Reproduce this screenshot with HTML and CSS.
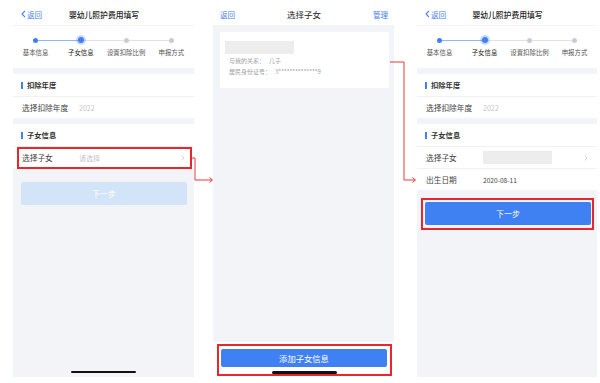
FILE: index.html
```html
<!DOCTYPE html>
<html lang="zh-CN">
<head>
  <meta charset="UTF-8" />
  <meta name="viewport" content="width=device-width, initial-scale=1.0" />
  <title>婴幼儿照护费用填写</title>
  <link rel="stylesheet" href="styles.css">
</head>
<body>
  <div class="page">
    <!-- 第一屏：填写，未选子女 -->
    <section class="screen">
      <header class="nav">
        <span class="nav-back">
          <svg class="back-icon" viewBox="0 0 5 8" width="5" height="8"><path d="M4 0.8 L1 4 L4 7.2" fill="none" stroke="currentColor" stroke-width="1.1"/></svg>返回
        </span>
        <h1 class="nav-title">婴幼儿照护费用填写</h1>
        <span></span>
      </header>
      <ol class="steps">
        <li class="step done"><i class="dot"></i>基本信息</li>
        <li class="step current"><i class="dot"></i>子女信息</li>
        <li class="step"><i class="dot"></i>设置扣除比例</li>
        <li class="step"><i class="dot"></i>申报方式</li>
      </ol>
      <div class="group">
        <h2 class="group-title">扣除年度</h2>
        <div class="row"><span class="row-label">选择扣除年度</span><span class="row-value muted">2022</span></div>
      </div>
      <div class="group">
        <h2 class="group-title">子女信息</h2>
        <div class="row mark mark-row">
          <span class="row-label">选择子女</span><span class="row-value muted">请选择</span>
          <svg class="chevron" viewBox="0 0 4 6" width="4" height="6"><path d="M0.8 0.6 L3 3 L0.8 5.4" fill="none" stroke="currentColor" stroke-width="0.8"/></svg>
        </div>
      </div>
      <button class="btn btn-next disabled">下一步</button>
      <div class="home-bar"></div>
    </section>

    <!-- 第二屏：选择子女 -->
    <section class="screen screen-list">
      <header class="nav">
        <span class="nav-back">返回</span>
        <h1 class="nav-title big">选择子女</h1>
        <span class="nav-action">管理</span>
      </header>
      <div class="list">
        <div class="child-card">
          <div class="blank"></div>
          <p class="child-line">与我的关系：<span>儿子</span></p>
          <p class="child-line">居民身份证号：<span>3**************9</span></p>
        </div>
      </div>
      <footer class="list-footer mark mark-footer">
        <button class="btn btn-add">添加子女信息</button>
        <div class="home-bar"></div>
      </footer>
    </section>

    <!-- 第三屏：已选子女 -->
    <section class="screen screen-done">
      <header class="nav">
        <span class="nav-back">
          <svg class="back-icon" viewBox="0 0 5 8" width="5" height="8"><path d="M4 0.8 L1 4 L4 7.2" fill="none" stroke="currentColor" stroke-width="1.1"/></svg>返回
        </span>
        <h1 class="nav-title">婴幼儿照护费用填写</h1>
        <span></span>
      </header>
      <ol class="steps">
        <li class="step done"><i class="dot"></i>基本信息</li>
        <li class="step current"><i class="dot"></i>子女信息</li>
        <li class="step"><i class="dot"></i>设置扣除比例</li>
        <li class="step"><i class="dot"></i>申报方式</li>
      </ol>
      <div class="group">
        <h2 class="group-title">扣除年度</h2>
        <div class="row"><span class="row-label">选择扣除年度</span><span class="row-value muted">2022</span></div>
      </div>
      <div class="group">
        <h2 class="group-title">子女信息</h2>
        <div class="row">
          <span class="row-label">选择子女</span><span class="blank blank-value"></span>
          <svg class="chevron" viewBox="0 0 4 6" width="4" height="6"><path d="M0.8 0.6 L3 3 L0.8 5.4" fill="none" stroke="currentColor" stroke-width="0.8"/></svg>
        </div>
        <div class="row"><span class="row-label">出生日期</span><span class="row-value">2020-08-11</span></div>
      </div>
      <button class="btn btn-next mark mark-btn">下一步</button>
    </section>

    <svg class="arrows" viewBox="0 0 600 383" width="600" height="383">
      <path d="M192 158 H195 V180 H212" fill="none" stroke="#e8383d" stroke-width="1"/>
      <path d="M209.5 177.5 L212.5 180 L209.5 182.5" fill="none" stroke="#e8383d" stroke-width="1"/>
      <path d="M390 62 H404 V180 H415" fill="none" stroke="#e8383d" stroke-width="1"/>
      <path d="M412.5 177.5 L415.5 180 L412.5 182.5" fill="none" stroke="#e8383d" stroke-width="1"/>
    </svg>
  </div>
</body>
</html>
```

FILE: styles.css
```css
body {
  margin: 0;
  font-family: "Noto Sans CJK SC", "Noto Sans", sans-serif;
  background: #fff;
  color: #333;
}
.page {
  position: relative;
  width: 600px;
  height: 383px;
  display: flex;
  padding-left: 13px;
  box-sizing: border-box;
  overflow: hidden;
}
.screen {
  width: 181px;
  height: 377px;
  display: flex;
  flex-direction: column;
  background: #f3f4f8;
}
.screen-list {
  margin-left: 19px;
}
.screen-done {
  width: 180px;
  margin-left: 23px;
}

/* 顶部导航 */
.nav {
  height: 26px;
  box-sizing: border-box;
  padding: 3px 6px 0 7px;
  display: grid;
  grid-template-columns: 1fr auto 1fr;
  align-items: center;
  background: #fff;
  border-bottom: 1px solid #f4f4f6;
}
.nav-back {
  display: flex;
  align-items: center;
  gap: 1px;
  font-size: 7.5px;
  color: #3f80f2;
}
.back-icon {
  margin-left: 1px;
}
.nav-title {
  margin: 0;
  font-size: 7.8px;
  font-weight: 500;
  color: #222;
}
.nav-title.big {
  font-size: 8.5px;
  font-weight: 400;
}
.nav-action {
  justify-self: end;
  font-size: 7.5px;
  color: #3f80f2;
}

/* 步骤条 */
.steps {
  list-style: none;
  margin: 0;
  padding: 11px 0 0;
  height: 42px;
  box-sizing: border-box;
  display: grid;
  grid-template-columns: repeat(4, 1fr);
  background: #fff;
}
.step {
  position: relative;
  display: flex;
  flex-direction: column;
  align-items: center;
  font-size: 6.4px;
  line-height: 8px;
  color: #555;
}
.step:not(:last-child)::after {
  content: "";
  position: absolute;
  top: 3px;
  left: 50%;
  width: 100%;
  height: 1px;
  background: #dfe2e8;
}
.step.done::after {
  background: #8fb5f6;
}
.dot {
  position: relative;
  z-index: 1;
  width: 5px;
  height: 5px;
  margin: 0.5px 0 6.5px;
  border-radius: 50%;
  background: #c9ccd3;
}
.step.done .dot {
  background: #3f80f2;
}
.step.current {
  color: #222;
}
.step.current .dot {
  width: 6px;
  height: 6px;
  margin: 0 0 6px;
  background: #3f80f2;
  box-shadow: 0 0 0 2px rgba(63, 128, 242, 0.28);
}

/* 分组与行 */
.group {
  margin-top: 6px;
  background: #fff;
}
.group-title {
  margin: 0;
  height: 22px;
  display: flex;
  align-items: center;
  gap: 4px;
  padding-left: 8px;
  font-size: 7.3px;
  font-weight: 700;
  color: #333;
}
.group-title::before {
  content: "";
  width: 2px;
  height: 7px;
  background: #3f80f2;
}
.row {
  height: 22px;
  display: flex;
  align-items: center;
  padding: 0 9px;
  border-top: 1px solid #f1f1f3;
  box-sizing: border-box;
  font-size: 7.7px;
}
.row-label {
  width: 57px;
  flex: none;
  color: #444;
}
.row-value {
  color: #444;
  font-size: 6.6px;
}
.row-value.muted {
  color: #c4c4c8;
  font-size: 7px;
}
.chevron {
  margin-left: auto;
  color: #c7c7cc;
}
.blank {
  background: #ededee;
}
.blank-value {
  width: 69px;
  height: 13px;
}

/* 按钮 */
.btn {
  display: block;
  border: none;
  border-radius: 2px;
  font-family: inherit;
  color: #fff;
  background: #3f80f2;
  font-size: 8px;
}
.btn-next {
  height: 23px;
  margin: 14px 7px 0 8px;
}
.btn-next.disabled {
  background: #d3e4f8;
}
.screen-done .btn-next {
  margin-top: 12px;
  margin-right: 6px;
}
.home-bar {
  width: 65px;
  height: 2.5px;
  margin: auto auto 4px;
  border-radius: 2px;
  background: #111;
}

/* 子女列表 */
.list {
  flex: 1;
  padding: 6px 5px 0 7px;
}
.child-card {
  background: #fff;
  height: 56px;
  box-sizing: border-box;
  padding: 9px 5px 0;
}
.child-card .blank {
  width: 69px;
  height: 13px;
}
.child-line {
  margin: 2px 0 0;
  padding-left: 4px;
  font-size: 6px;
  line-height: 9px;
  color: #a2a2a6;
}
.child-line span {
  margin-left: 4px;
}
.list-footer {
  height: 35px;
  box-sizing: border-box;
  padding: 7px 7px 0 8px;
  background: #fff;
  display: flex;
  flex-direction: column;
}
.btn-add {
  width: 100%;
  height: 18px;
  font-size: 8.3px;
}
.list-footer .home-bar {
  margin: 4px auto 0;
}

/* 标注红框 */
.mark {
  position: relative;
}
.mark::after {
  content: "";
  position: absolute;
  border: 2px solid #e8272c;
  pointer-events: none;
}
.mark-row::after {
  inset: 0 2px -1px 4px;
}
.mark-footer::after {
  inset: 2px 2px 1px 4px;
}
.mark-btn::after {
  inset: -4px -3px -5px -4px;
}
.arrows {
  position: absolute;
  top: 0;
  left: 0;
  pointer-events: none;
}
```
